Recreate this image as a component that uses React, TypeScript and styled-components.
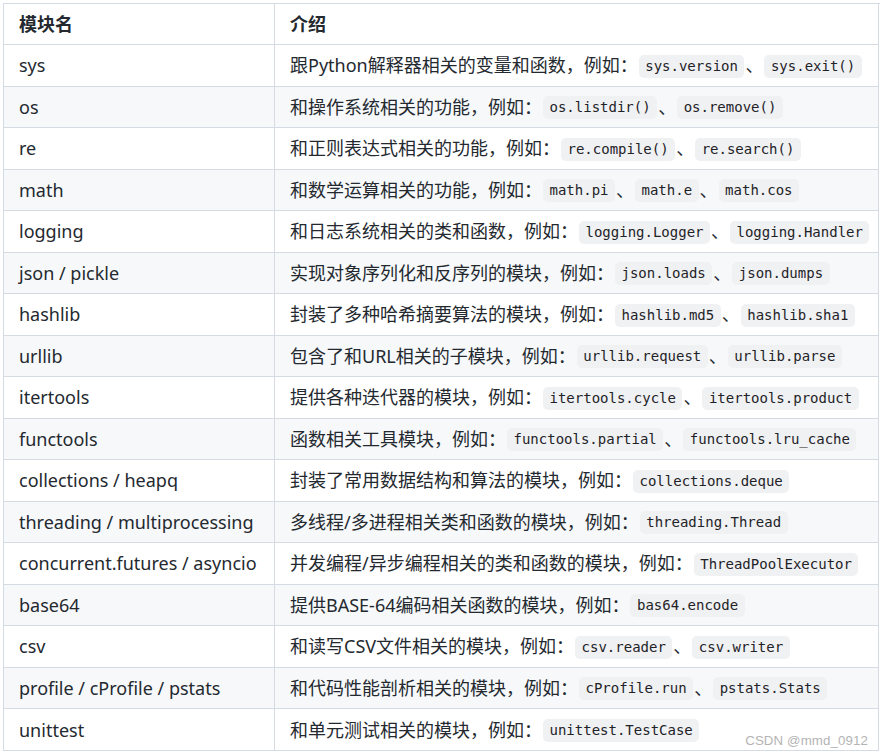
import React from "react";
import styled, { createGlobalStyle } from "styled-components";

const GlobalStyle = createGlobalStyle`
  html, body { margin: 0; padding: 0; background: #ffffff; }
  body {
    font-family: "Noto Sans", "Noto Sans CJK SC", sans-serif;
    color: #24292f;
  }
`;

const Page = styled.div`
  position: relative;
  padding: 3px;
  width: 883px;
  height: 756px;
  box-sizing: border-box;
`;

const Grid = styled.div`
  display: grid;
  grid-template-columns: 271px 604px;
  width: 876px;
  border-top: 1px solid #d5dbe3;
  border-left: 1px solid #d5dbe3;
  box-sizing: content-box;
`;

const Cell = styled.div<{ $striped?: boolean; $head?: boolean }>`
  display: flex;
  align-items: center;
  flex-wrap: nowrap;
  white-space: nowrap;
  box-sizing: border-box;
  height: ${(p) => (p.$head ? "41px" : "41.53px")};
  padding: 0 15px;
  border-right: 1px solid #d5dbe3;
  border-bottom: 1px solid #d5dbe3;
  background: ${(p) => (p.$striped ? "#f6f8fa" : "#ffffff")};
  font-size: 18px;
  font-weight: ${(p) => (p.$head ? 700 : 400)};
  line-height: 24px;
`;

const Code = styled.code`
  display: inline-block;
  font-family: "DejaVu Sans Mono", monospace;
  font-size: 14px;
  line-height: 23px;
  height: 23px;
  padding: 0 6.5px;
  margin: 2px 1px 0;
  border-radius: 5px;
  background: #eff1f3;
  color: #1f2328;
`;

const Watermark = styled.div`
  position: absolute;
  right: 15px;
  bottom: 8px;
  font-family: "Liberation Sans", Arial, sans-serif;
  font-size: 13.3px;
  color: #b4b4b4;
  letter-spacing: 0.1px;
`;

type Row = { name: string; desc: string; codes: string[] };

const rows: Row[] = [
  { name: "sys", desc: "跟Python解释器相关的变量和函数，例如：", codes: ["sys.version", "sys.exit()"] },
  { name: "os", desc: "和操作系统相关的功能，例如：", codes: ["os.listdir()", "os.remove()"] },
  { name: "re", desc: "和正则表达式相关的功能，例如：", codes: ["re.compile()", "re.search()"] },
  { name: "math", desc: "和数学运算相关的功能，例如：", codes: ["math.pi", "math.e", "math.cos"] },
  { name: "logging", desc: "和日志系统相关的类和函数，例如：", codes: ["logging.Logger", "logging.Handler"] },
  { name: "json / pickle", desc: "实现对象序列化和反序列的模块，例如：", codes: ["json.loads", "json.dumps"] },
  { name: "hashlib", desc: "封装了多种哈希摘要算法的模块，例如：", codes: ["hashlib.md5", "hashlib.sha1"] },
  { name: "urllib", desc: "包含了和URL相关的子模块，例如：", codes: ["urllib.request", "urllib.parse"] },
  { name: "itertools", desc: "提供各种迭代器的模块，例如：", codes: ["itertools.cycle", "itertools.product"] },
  { name: "functools", desc: "函数相关工具模块，例如：", codes: ["functools.partial", "functools.lru_cache"] },
  { name: "collections / heapq", desc: "封装了常用数据结构和算法的模块，例如：", codes: ["collections.deque"] },
  { name: "threading / multiprocessing", desc: "多线程/多进程相关类和函数的模块，例如：", codes: ["threading.Thread"] },
  { name: "concurrent.futures / asyncio", desc: "并发编程/异步编程相关的类和函数的模块，例如：", codes: ["ThreadPoolExecutor"] },
  { name: "base64", desc: "提供BASE-64编码相关函数的模块，例如：", codes: ["bas64.encode"] },
  { name: "csv", desc: "和读写CSV文件相关的模块，例如：", codes: ["csv.reader", "csv.writer"] },
  { name: "profile / cProfile / pstats", desc: "和代码性能剖析相关的模块，例如：", codes: ["cProfile.run", "pstats.Stats"] },
  { name: "unittest", desc: "和单元测试相关的模块，例如：", codes: ["unittest.TestCase"] },
];

export default function App() {
  return (
    <>
      <GlobalStyle />
      <Page>
        <Grid>
          <Cell $head>模块名</Cell>
          <Cell $head>介绍</Cell>
          {rows.map((r, i) => {
            const striped = i % 2 === 1;
            return (
              <React.Fragment key={r.name}>
                <Cell $striped={striped}>{r.name}</Cell>
                <Cell $striped={striped}>
                  <span>{r.desc}</span>
                  {r.codes.map((c, j) => (
                    <React.Fragment key={c}>
                      {j > 0 && <span>、</span>}
                      <Code>{c}</Code>
                    </React.Fragment>
                  ))}
                </Cell>
              </React.Fragment>
            );
          })}
        </Grid>
        <Watermark>CSDN @mmd_0912</Watermark>
      </Page>
    </>
  );
}
